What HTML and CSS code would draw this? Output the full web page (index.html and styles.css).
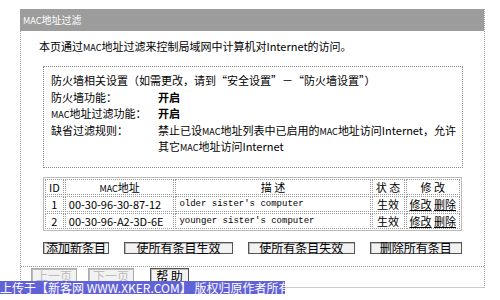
FILE: index.html
```html
<!DOCTYPE HTML>
<html>
    <head>
        <meta charset="UTF-8">
        <title>MAC地址过滤</title>
        <link rel="stylesheet" href="styles.css">
    </head>
    <body>
        <div id="frame">
            <div class="title"><span class="en">MAC</span>地址过滤</div>
            <div class="content">
                <p class="intro">本页通过<span class="en">MAC</span>地址过滤来控制局域网中计算机对Internet的访问。</p>
                <div class="fw">
                    <p>防火墙相关设置（如需更改，请到“安全设置”－“防火墙设置”）</p>
                    <dl>
                        <dt>防火墙功能：</dt><dd><b>开启</b></dd>
                        <dt><span class="en">MAC</span>地址过滤功能：</dt><dd><b>开启</b></dd>
                        <dt>缺省过滤规则：</dt><dd>禁止已设<span class="en">MAC</span>地址列表中已启用的<span class="en">MAC</span>地址访问Internet，允许其它<span class="en">MAC</span>地址访问Internet</dd>
                    </dl>
                </div>
                <table class="list">
                    <tr class="head">
                        <td class="c-id">ID</td>
                        <td class="c-mac"><span class="en">MAC</span>地址</td>
                        <td class="c-desc">描 述</td>
                        <td class="c-st">状 态</td>
                        <td class="c-op">修 改</td>
                    </tr>
                    <tr>
                        <td class="c-id">1</td>
                        <td class="c-mac">00-30-96-30-87-12</td>
                        <td class="c-desc mono">older sister's computer</td>
                        <td class="c-st">生效</td>
                        <td class="c-op"><a href="#">修改</a> <a href="#">删除</a></td>
                    </tr>
                    <tr>
                        <td class="c-id">2</td>
                        <td class="c-mac">00-30-96-A2-3D-6E</td>
                        <td class="c-desc mono">younger sister's computer</td>
                        <td class="c-st">生效</td>
                        <td class="c-op"><a href="#">修改</a> <a href="#">删除</a></td>
                    </tr>
                </table>
                <div class="btns">
                    <button class="b1">添加新条目</button>
                    <button class="b2">使所有条目生效</button>
                    <button class="b3">使所有条目失效</button>
                    <button class="b4">删除所有条目</button>
                </div>
            </div>
            <div class="nav">
                <button class="off">上一页</button>
                <button class="off">下一页</button>
                <button class="help">帮 助</button>
            </div>
        </div>
        <div class="mark">上传于【新客网 WWW.XKER.COM】 版权归原作者所有</div>
    </body>
</html>
```

FILE: styles.css
```css
body{margin:0;background:#fff;color:#000;font-family:"Noto Sans CJK SC","Liberation Sans",sans-serif;font-size:11px;}
p,dl,dd{margin:0;}
.en{font-size:9px;line-height:1;}
#frame{
    width: 463px;
    height: 278px;
    margin: 9px 0 0 20px;
    border-left: 1px dotted #999;
    border-right: 1px dotted #999;
    border-bottom: 1px solid #ccc;
}
#frame .title{
    height: 22px;
    margin-left: -1px;
    padding-left: 3px;
    line-height: 22px;
    font-size: 10px;
    color: #fff;
    background: #9c9c9c;
}
.content{
    padding: 6px 22px 0 18px;
    border-bottom: 1px dotted #999;
}
.intro{
    height: 18px;
    line-height: 18px;
}
.fw{
    margin: 11px 0 0 4px;
    width: 411px;
    height: 84px;
    padding: 5px 0 11px 7px;
    border: 1px dotted #888;
    line-height: 16.5px;
}
.fw p{height:16.5px;white-space:nowrap;}
.fw dl{
    display: grid;
    grid-template-columns: 107px 1fr;
}
.fw dt{height:16.5px;white-space:nowrap;}
.fw dd{padding-right:4px;}
.list{
    margin: 9px 0 0 4px;
    width: 419px;
    border-collapse: separate;
    border-spacing: 1px;
    border: 1px solid #bbb;
}
.list td{
    height: 14px;
    padding: 0 3px;
    border: 1px dotted #999;
    line-height: 14px;
    white-space: nowrap;
}
.list .c-id{width:9px;text-align:center;}
.list .c-mac{width:102px;}
.list .head .c-mac{text-align:center;}
.list .c-desc{width:190px;}
.list .head .c-desc{text-align:center;}
.list .mono{font-family:"Liberation Mono",monospace;font-size:9px;}
.list .c-st{width:25px;text-align:center;}
.list .c-op{text-align:center;}
.list a{color:#000;}
.btns{
    display: flex;
    gap: 15px;
    margin: 11px 0 0 4px;
    height: 24px;
}
button{
    height: 12px;
    padding: 0;
    font: inherit;
    font-size: 12px;
    line-height: 10px;
    color: #000;
    background: #f2f2f2;
    border: 1px solid #555;
    box-shadow: inset 1px 1px #bbb;
    overflow: visible;
}
.btns .b1{width:68px;}
.btns .b2{width:112px;}
.btns .b3{width:110px;}
.btns .b4{width:95px;}
.nav{
    display: flex;
    gap: 11px;
    padding: 1px 0 0 10px;
}
.nav button{width:46px;height:15px;line-height:11px;}
.nav .off{color:#bbb;border-color:#aaa;}
.nav .help{width:39px;margin-left:5px;}
.mark{
    position: absolute;
    left: 0;
    top: 281px;
    width: 285px;
    height: 13px;
    line-height: 13px;
    font-size: 12px;
    color: #fff;
    background: #6262d8;
    white-space: nowrap;
    overflow: hidden;
}
```
